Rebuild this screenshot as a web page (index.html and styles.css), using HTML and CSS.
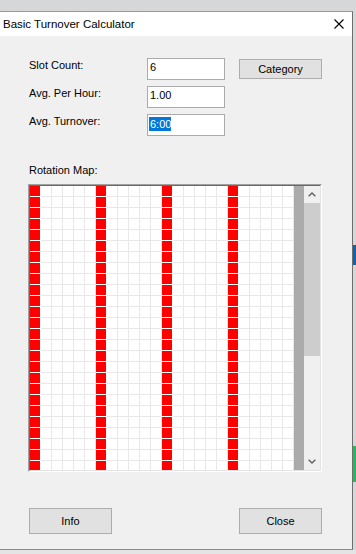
FILE: index.html
```html
<!DOCTYPE html>
<html lang="en">
<head>
    <meta charset="UTF-8">
    <meta name="viewport" content="width=device-width, initial-scale=1.0">
    <title>Basic Turnover Calculator</title>
    <link rel="stylesheet" href="styles.css">
</head>
<body>
    <div class="screen">
        <div class="window">
            <div class="titlebar">
                <span class="title">Basic Turnover Calculator</span>
                <svg class="close" width="10" height="10" viewBox="0 0 10 10">
                    <path d="M0.5 0.5 L9.5 9.5 M9.5 0.5 L0.5 9.5" stroke="#000" stroke-width="1.1" fill="none"/>
                </svg>
            </div>
            <div class="client">
                <div class="fields">
                    <span class="label">Slot Count:</span>
                    <div class="field">6</div>
                    <div class="btn small">Category</div>

                    <span class="label">Avg. Per Hour:</span>
                    <div class="field">1.00</div>
                    <span></span>

                    <span class="label">Avg. Turnover:</span>
                    <div class="field"><span class="sel">6:00</span></div>
                    <span></span>
                </div>

                <div class="map-label">Rotation Map:</div>
                <div class="map">
                    <div class="map-inner">
                        <div class="cells"></div>
                        <div class="gap"></div>
                        <div class="vscroll">
                            <div class="arrow">
                                <svg width="8" height="5" viewBox="0 0 8 5"><path d="M0.7 4.3 L4 1 L7.3 4.3" stroke="#606060" stroke-width="1.4" fill="none"/></svg>
                            </div>
                            <div class="track"><div class="thumb"></div></div>
                            <div class="arrow">
                                <svg width="8" height="5" viewBox="0 0 8 5"><path d="M0.7 0.7 L4 4 L7.3 0.7" stroke="#606060" stroke-width="1.4" fill="none"/></svg>
                            </div>
                        </div>
                    </div>
                </div>

                <div class="actions">
                    <div class="btn">Info</div>
                    <div class="btn">Close</div>
                </div>
            </div>
        </div>
        <div class="edge">
            <div class="edge-blue"></div>
            <div class="edge-green"></div>
        </div>
    </div>
    <div class="taskbar"></div>
</body>
</html>
```

FILE: styles.css
```css
* {
    box-sizing: border-box;
}

body {
    margin: 0;
    width: 356px;
    height: 554px;
    overflow: hidden;
    background-color: #d6d7d8;
    font-family: "Liberation Sans", Arial, sans-serif;
    font-size: 11px;
    color: #000;
}

.screen {
    display: flex;
    padding-top: 11px;
}

.window {
    width: 353px;
    border-top: 1px solid #9a9a9a;
    border-right: 1px solid #6e6e6e;
    border-bottom: 1px solid #8a8a8a;
    display: flex;
    flex-direction: column;
}

.titlebar {
    height: 24px;
    background-color: #fff;
    display: flex;
    align-items: center;
    justify-content: space-between;
    padding: 0 8px 0 3px;
    font-size: 11.5px;
    line-height: 24px;
}

.client {
    height: 513px;
    background-color: #f0f0f0;
    padding: 22px 30px 0 29px;
}

.fields {
    display: grid;
    grid-template-columns: 118px 78px 97px;
    grid-auto-rows: 22px;
    row-gap: 6px;
}

.label {
    padding-top: 1px;
    line-height: 13px;
}

.field {
    background-color: #fff;
    border: 1px solid #ababab;
    padding: 2px 2px 0;
    line-height: 13px;
}

.sel {
    display: inline-block;
    margin-left: -1px;
    padding-left: 1px;
    line-height: 14px;
    background-color: #0078d7;
    color: #fff;
}

.btn {
    width: 83px;
    height: 26px;
    background-color: #e1e1e1;
    border: 1px solid #adadad;
    display: flex;
    align-items: center;
    justify-content: center;
}

.btn.small {
    height: 20px;
    margin-top: 1px;
    justify-self: end;
}

.map-label {
    margin-top: 28px;
    line-height: 13px;
}

.map {
    margin-top: 7px;
    margin-left: -1px;
    width: 294px;
    height: 288px;
    border: 1px solid;
    border-color: #a0a0a0 #fff #fff #a0a0a0;
}

.map-inner {
    height: 100%;
    display: flex;
    border: 1px solid;
    border-color: #696969 #e3e3e3 #e3e3e3 #696969;
}

/* 24 columns x 11px, a red slot every 6th column */
.cells {
    width: 264px;
    background-color: #fff;
    background-image:
        conic-gradient(from 0deg at 10px 10px, transparent 0deg 270deg, #ff0000 270deg 360deg),
        linear-gradient(to right, #fff 11px, transparent 11px),
        linear-gradient(to right, transparent 10px, #e8e8e8 10px),
        linear-gradient(to bottom, transparent 10px, #e8e8e8 10px);
    background-size: 66px 11px, 66px 11px, 11px 11px, 11px 11px;
}

.gap {
    width: 10px;
    background-color: #ababab;
}

.vscroll {
    width: 16px;
    background-color: #f0f0f0;
    display: flex;
    flex-direction: column;
}

.arrow {
    height: 17px;
    display: flex;
    align-items: center;
    justify-content: center;
}

.track {
    flex: 1;
}

.thumb {
    height: 153px;
    background-color: #cdcdcd;
}

.actions {
    margin-top: 36px;
    display: flex;
    justify-content: space-between;
}

.edge {
    flex: 1;
    display: flex;
    flex-direction: column;
}

.edge-blue {
    margin-top: 234px;
    height: 20px;
    background-color: #0e63b0;
}

.edge-green {
    margin-top: 181px;
    height: 36px;
    background-color: #1dbe5a;
}

.taskbar {
    height: 4px;
    background-color: #e4e4e4;
}
```
